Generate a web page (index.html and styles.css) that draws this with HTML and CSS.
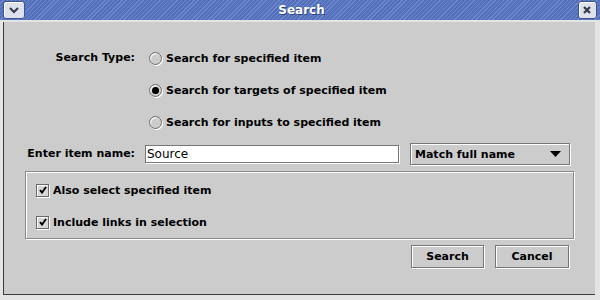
FILE: index.html
```html
<!DOCTYPE html>
<html lang="en">

<head>
    <meta charset="UTF-8">
    <title>Search</title>
    <link rel="stylesheet" href="styles.css">
</head>

<body>
    <div class="window">
        <div class="titlebar">
            <span class="tbtn menu-btn">
                <svg width="12" height="8" viewBox="0 0 12 8"><path d="M2 2 L6 6 L10 2" fill="none" stroke="#333a4c" stroke-width="2"/></svg>
            </span>
            <span class="title">Search</span>
            <span class="tbtn close-btn">
                <svg width="10" height="10" viewBox="0 0 10 10"><path d="M2 2 L8 8 M8 2 L2 8" fill="none" stroke="#333a4c" stroke-width="2.2"/></svg>
            </span>
        </div>

        <div class="client">
            <div class="form">
                <div class="lbl type-lbl">Search Type:</div>
                <div class="radios">
                    <div class="radio-row">
                        <span class="radio"></span>
                        <span>Search for specified item</span>
                    </div>
                    <div class="radio-row">
                        <span class="radio on"></span>
                        <span>Search for targets of specified item</span>
                    </div>
                    <div class="radio-row">
                        <span class="radio"></span>
                        <span>Search for inputs to specified item</span>
                    </div>
                </div>

                <div class="lbl name-lbl">Enter item name:</div>
                <div class="name-row">
                    <div class="field">Source</div>
                    <div class="combo">
                        <span>Match full name</span>
                        <svg width="11" height="6" viewBox="0 0 11 6"><path d="M0 0 H11 L5.5 6 Z" fill="#000"/></svg>
                    </div>
                </div>
            </div>

            <div class="group">
                <div class="check-row">
                    <span class="check">
                        <svg width="8" height="8" viewBox="0 0 8 8"><path d="M1 4 L3 6.5 L7 1" fill="none" stroke="#000" stroke-width="2"/></svg>
                    </span>
                    <span>Also select specified item</span>
                </div>
                <div class="check-row">
                    <span class="check">
                        <svg width="8" height="8" viewBox="0 0 8 8"><path d="M1 4 L3 6.5 L7 1" fill="none" stroke="#000" stroke-width="2"/></svg>
                    </span>
                    <span>Include links in selection</span>
                </div>
            </div>

            <div class="buttons">
                <div class="btn search-btn">Search</div>
                <div class="btn cancel-btn">Cancel</div>
            </div>
        </div>
    </div>
</body>

</html>
```

FILE: styles.css
```css
* {
    margin: 0;
    padding: 0;
    box-sizing: border-box;
}

body {
    font-family: "DejaVu Sans", "Liberation Sans", sans-serif;
    font-size: 11px;
    font-weight: bold;
    color: #000;
}

.window {
    width: 600px;
    height: 300px;
    background-color: #e4e4e4;
    padding: 0 5px 5px 3px;
    display: flex;
    flex-direction: column;
}

.titlebar {
    height: 22px;
    margin: 0 -5px 0 -3px;
    border-bottom: 2px solid #e4e4e4;
    background: repeating-linear-gradient(135deg, #5470bb 0 2px, #6d88cd 2px 3px);
    display: flex;
    align-items: center;
    justify-content: space-between;
    padding: 0 3px;
}

.tbtn {
    width: 22px;
    height: 18px;
    border: 1px solid #3d5290;
    border-radius: 3px;
    background-color: #dde1ec;
    box-shadow: inset 1px 1px 0 #fff;
    display: flex;
    align-items: center;
    justify-content: center;
}

.close-btn {
    width: 19px;
}

.title {
    color: #fff;
    font-size: 12px;
    text-shadow: 1px 1px 0 #2c3f78;
}

.client {
    flex: 1;
    background-color: #cccccc;
    border-left: 1px solid #3c3c3c;
    border-bottom: 1px solid #3c3c3c;
    display: flex;
    flex-direction: column;
}

.form {
    display: grid;
    grid-template-columns: 131px 1fr;
    column-gap: 10px;
    padding-top: 24px;
}

.lbl {
    text-align: right;
}

.type-lbl {
    height: 24px;
    line-height: 24px;
}

.radios {
    display: flex;
    flex-direction: column;
    gap: 8px;
    padding-left: 4px;
}

.radio-row,
.check-row {
    height: 24px;
    display: flex;
    align-items: center;
    gap: 4px;
}

.radio {
    width: 13px;
    height: 13px;
    border-radius: 50%;
    border: 1px solid #6a6a6a;
    background-color: #cccccc;
    box-shadow: 1px 1px 0 #fff, inset 1px 1px 0 #fff;
    display: flex;
    align-items: center;
    justify-content: center;
}

.radio.on::after {
    content: "";
    width: 7px;
    height: 7px;
    border-radius: 50%;
    background-color: #000;
}

.name-lbl {
    margin-top: 9px;
    height: 22px;
    line-height: 22px;
}

.name-row {
    margin-top: 9px;
    height: 22px;
    display: flex;
    align-items: center;
    gap: 11px;
}

.field {
    width: 254px;
    height: 18px;
    background-color: #fff;
    border: 1px solid #777;
    box-shadow: 1px 1px 0 #fff;
    font-weight: normal;
    font-size: 12px;
    line-height: 16px;
    padding-left: 1px;
}

.combo {
    width: 160px;
    height: 22px;
    border: 1px solid #777;
    box-shadow: 1px 1px 0 #fff, inset 1px 1px 0 #fff;
    display: flex;
    align-items: center;
    justify-content: space-between;
    padding: 0 8px 0 4px;
}

.group {
    margin: 6px 0 0 21px;
    width: 549px;
    height: 68px;
    border: 1px solid #8a8a8a;
    box-shadow: inset 1px 1px 0 #fff, 1px 1px 0 #fff;
    padding: 6px 0 0 10px;
    display: flex;
    flex-direction: column;
    gap: 8px;
}

.check {
    width: 13px;
    height: 13px;
    border: 1px solid #6a6a6a;
    background-color: #d8d8d8;
    box-shadow: 1px 1px 0 #fff, inset 1px 1px 0 #fff;
    display: flex;
    align-items: center;
    justify-content: center;
}

.buttons {
    margin: 6px 26px 0 0;
    display: flex;
    justify-content: flex-end;
    gap: 11px;
}

.btn {
    height: 23px;
    line-height: 21px;
    text-align: center;
    border: 1px solid #777;
    box-shadow: inset 1px 1px 0 #fff, 1px 1px 0 #fff;
}

.search-btn {
    width: 73px;
}

.cancel-btn {
    width: 74px;
}
```
